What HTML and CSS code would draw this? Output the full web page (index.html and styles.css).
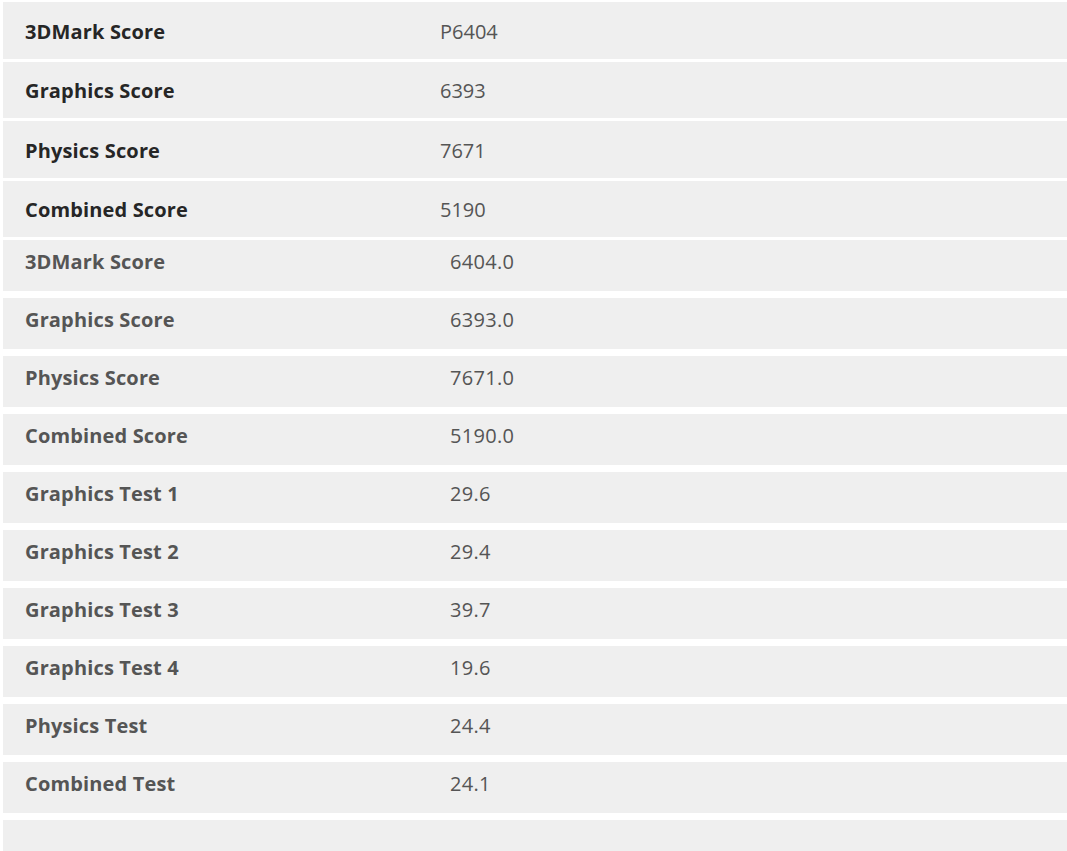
FILE: index.html
```html
<!DOCTYPE html>
<html lang="en">
<head>
<meta charset="utf-8">
<title>3DMark results</title>
<link rel="stylesheet" href="styles.css">
</head>
<body>
<div class="page">
  <div class="summary">
    <div class="row"><div class="label">3DMark Score</div><div class="value">P6404</div></div>
    <div class="row"><div class="label">Graphics Score</div><div class="value">6393</div></div>
    <div class="row"><div class="label">Physics Score</div><div class="value">7671</div></div>
    <div class="row"><div class="label">Combined Score</div><div class="value">5190</div></div>
  </div>
  <div class="details">
    <div class="row"><div class="label">3DMark Score</div><div class="value">6404.0</div></div>
    <div class="row"><div class="label">Graphics Score</div><div class="value">6393.0</div></div>
    <div class="row"><div class="label">Physics Score</div><div class="value">7671.0</div></div>
    <div class="row"><div class="label">Combined Score</div><div class="value">5190.0</div></div>
    <div class="row"><div class="label">Graphics Test 1</div><div class="value">29.6</div></div>
    <div class="row"><div class="label">Graphics Test 2</div><div class="value">29.4</div></div>
    <div class="row"><div class="label">Graphics Test 3</div><div class="value">39.7</div></div>
    <div class="row"><div class="label">Graphics Test 4</div><div class="value">19.6</div></div>
    <div class="row"><div class="label">Physics Test</div><div class="value">24.4</div></div>
    <div class="row"><div class="label">Combined Test</div><div class="value">24.1</div></div>
    <div class="row empty"><div class="label"></div><div class="value"></div></div>
  </div>
</div>
</body>
</html>
```

FILE: styles.css
```css
html, body {
  margin: 0;
  padding: 0;
  overflow: hidden;
  background: #ffffff;
}

body {
  font-family: "Open Sans", "Liberation Sans", sans-serif;
  font-size: 20px;
  color: #555555;
}

.page {
  padding: 2px 0 0 3px;
  width: 1080px;
  display: flex;
  flex-direction: column;
  gap: 3px;
}

.summary {
  display: flex;
  flex-direction: column;
  gap: 3px;
}

.details {
  display: flex;
  flex-direction: column;
  gap: 7px;
}

.row {
  display: flex;
  align-items: center;
  background: #efefef;
}

.summary .row {
  height: 56.5px;
}

.details .row {
  height: 51px;
  padding-bottom: 8px;
  box-sizing: border-box;
}

.label {
  font-weight: 700;
  padding-left: 22px;
  box-sizing: border-box;
  letter-spacing: 0.15px;
}

.summary .label {
  width: 437px;
  color: #262626;
  padding-top: 2px;
}

.details .label {
  width: 447px;
  color: #555555;
}

.value {
  font-weight: 400;
  color: #555555;
  letter-spacing: 0.3px;
}

.summary .value {
  padding-top: 2px;
  letter-spacing: 0;
}

.details .empty {
  height: 60px;
}
```
